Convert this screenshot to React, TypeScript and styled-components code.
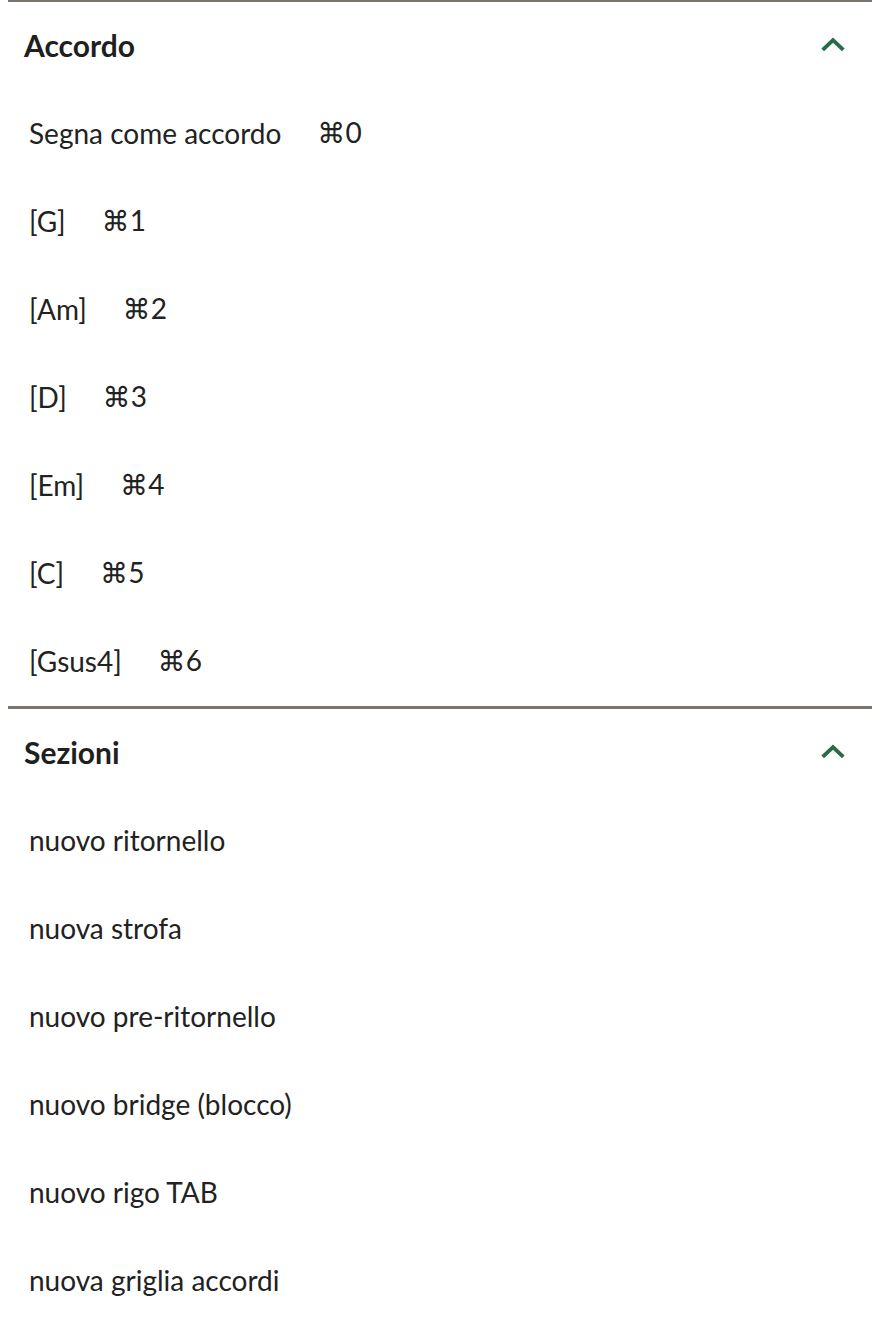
import React from "react";
import styled, { createGlobalStyle } from "styled-components";

const GlobalStyle = createGlobalStyle`
  *, *::before, *::after {
    box-sizing: border-box;
  }
  body {
    margin: 0;
    background: #ffffff;
    font-family: Lato, "Noto Sans", "DejaVu Sans", sans-serif;
    color: #222222;
  }
`;

const sections = [
  {
    title: "Accordo",
    items: [
      { label: "Segna come accordo", key: "0" },
      { label: "[G]", key: "1" },
      { label: "[Am]", key: "2" },
      { label: "[D]", key: "3" },
      { label: "[Em]", key: "4" },
      { label: "[C]", key: "5" },
      { label: "[Gsus4]", key: "6" },
    ],
  },
  {
    title: "Sezioni",
    items: [
      { label: "nuovo ritornello" },
      { label: "nuova strofa" },
      { label: "nuovo pre-ritornello" },
      { label: "nuovo bridge (blocco)" },
      { label: "nuovo rigo TAB" },
      { label: "nuova griglia accordi" },
    ],
  },
];

const ChevronUp = () => (
  <svg width="26" height="26" viewBox="0 0 24 24" fill="none">
    <path
      d="M2.5 16.5 L12 7.5 L21.5 16.5"
      stroke="#276b4b"
      strokeWidth="3.6"
      strokeLinecap="butt"
      strokeLinejoin="miter"
    />
  </svg>
);

export default function App() {
  return (
    <>
      <GlobalStyle />
      <Panel>
        {sections.map((section) => (
          <Section key={section.title}>
            <SectionHeader>
              <Title>{section.title}</Title>
              <ChevronUp />
            </SectionHeader>
            <ItemList>
              {section.items.map((item) => (
                <Item key={item.label}>
                  <Label>{item.label}</Label>
                  {item.key && <Shortcut>⌘{item.key}</Shortcut>}
                </Item>
              ))}
            </ItemList>
          </Section>
        ))}
      </Panel>
    </>
  );
}

const Panel = styled.div`
  margin: -1px 8px 0;
  display: flex;
  flex-direction: column;
`;

const Section = styled.section`
  border-top: 3px solid #7a766d;
`;

const SectionHeader = styled.header`
  height: 88px;
  display: flex;
  align-items: center;
  justify-content: space-between;
  padding: 0 26px 2px 16px;
`;

const Title = styled.h3`
  margin: 0;
  font-size: 30px;
  font-weight: 700;
  color: #1f1f1f;
`;

const ItemList = styled.ul`
  list-style: none;
  margin: 0;
  padding: 0;
`;

const Item = styled.li`
  height: 88px;
  display: flex;
  align-items: center;
  gap: 36px;
  padding: 0 21px 3px;
  font-size: 28px;
  cursor: pointer;
`;

const Label = styled.span`
  color: #222222;
`;

const Shortcut = styled.span`
  color: #222222;
`;
